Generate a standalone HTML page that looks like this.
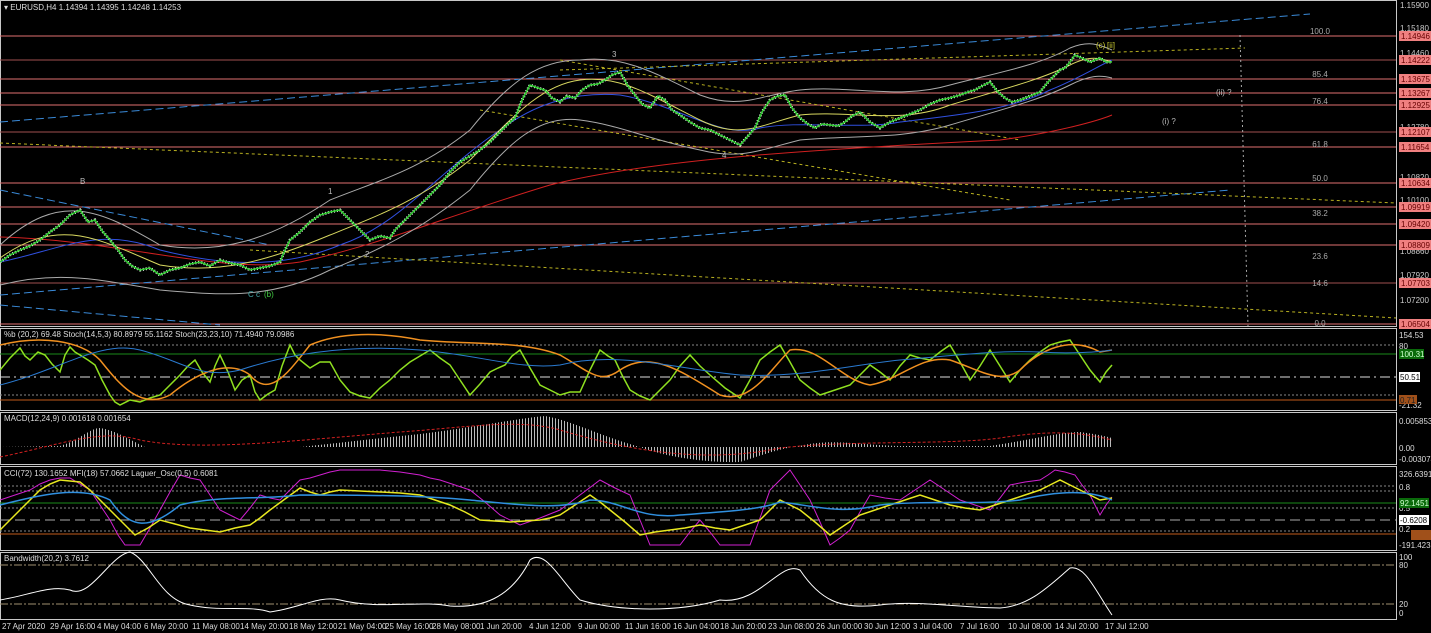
<!DOCTYPE html>
<html><head><meta charset="utf-8"><style>
html,body{margin:0;padding:0;background:#000;width:1431px;height:633px;overflow:hidden;font-family:"Liberation Sans",sans-serif}
svg text{font-family:"Liberation Sans",sans-serif;font-size:8px}
</style></head><body>
<svg width="1431" height="633" viewBox="0 0 1431 633" xmlns="http://www.w3.org/2000/svg">
<defs>
<pattern id="vb" width="3" height="4" patternUnits="userSpaceOnUse"><rect x="0" y="0" width="1" height="4" fill="#bbb"/></pattern>
</defs>
<rect width="1431" height="633" fill="#000"/>
<g stroke="#c8c8c8" stroke-width="1" fill="none">
<rect x="0.5" y="0.5" width="1396" height="326"/>
<rect x="0.5" y="328.5" width="1396" height="82"/>
<rect x="0.5" y="412.5" width="1396" height="52"/>
<rect x="0.5" y="466.5" width="1396" height="84"/>
<rect x="0.5" y="552.5" width="1396" height="67"/>
</g>
<g stroke="#e07070" stroke-width="1">
<line x1="0" y1="36" x2="1396" y2="36"/><line x1="0" y1="60" x2="1396" y2="60" stroke="#a05050"/>
<line x1="0" y1="79" x2="1396" y2="79"/><line x1="0" y1="93" x2="1396" y2="93"/>
<line x1="0" y1="105" x2="1396" y2="105"/><line x1="0" y1="132" x2="1396" y2="132" stroke="#a05050"/>
<line x1="0" y1="147" x2="1396" y2="147"/><line x1="0" y1="183" x2="1396" y2="183"/>
<line x1="0" y1="207" x2="1396" y2="207"/><line x1="0" y1="224" x2="1396" y2="224"/>
<line x1="0" y1="245" x2="1396" y2="245"/><line x1="0" y1="283" x2="1396" y2="283" stroke="#a05050"/>
<line x1="0" y1="324" x2="1396" y2="324"/>
</g>
<g fill="#aaa" text-anchor="middle"><text x="1320" y="34">100.0</text><text x="1320" y="77">85.4</text><text x="1320" y="104">76.4</text><text x="1320" y="147">61.8</text><text x="1320" y="181">50.0</text><text x="1320" y="216">38.2</text><text x="1320" y="259">23.6</text><text x="1320" y="286">14.6</text><text x="1320" y="326">0.0</text></g>
<g fill="none" stroke-width="1">
<line x1="0" y1="122" x2="1310" y2="14" stroke="#3a8ad8" stroke-dasharray="8,4"/>
<line x1="0" y1="295" x2="1230" y2="190" stroke="#3a8ad8" stroke-dasharray="8,4"/>
<line x1="0" y1="190" x2="270" y2="245" stroke="#3a8ad8" stroke-dasharray="8,4"/>
<line x1="0" y1="305" x2="220" y2="325" stroke="#3a8ad8" stroke-dasharray="8,4"/>
<line x1="0" y1="143" x2="1396" y2="203" stroke="#b8b020" stroke-dasharray="3,3"/>
<line x1="250" y1="250" x2="1396" y2="318" stroke="#b8b020" stroke-dasharray="3,3"/>
<line x1="480" y1="110" x2="1010" y2="200" stroke="#b8b020" stroke-dasharray="3,3"/>
<line x1="560" y1="60" x2="1020" y2="140" stroke="#b8b020" stroke-dasharray="3,3"/>
<line x1="560" y1="70" x2="1245" y2="48" stroke="#b8b020" stroke-dasharray="3,3"/>
<line x1="1240" y1="35" x2="1248" y2="326" stroke="#aaa" stroke-dasharray="2,3"/>
<path d="M0,237 C120,240 220,275 300,262 C380,245 450,215 550,185 C650,160 800,150 1000,140 C1060,132 1100,120 1112,115" stroke="#d02020"/>
<path d="M0,262 C60,250 100,225 160,250 C220,265 280,270 340,245 C400,225 440,170 500,130 C540,100 580,92 620,95 C680,105 720,140 760,128 C800,120 860,130 900,122 C960,115 1010,110 1050,90 C1080,78 1100,65 1112,60" stroke="#3050e0"/>
<path d="M0,258 C60,215 100,240 160,265 C220,275 270,260 330,235 C380,215 420,200 470,160 C510,120 540,85 580,80 C620,75 650,95 700,120 C740,140 760,125 800,115 C850,110 900,125 950,105 C1000,90 1040,80 1070,65 C1090,55 1100,58 1112,62" stroke="#d8d860"/>
<path d="M0,245 C60,190 100,210 160,245 C220,255 270,240 330,200 C380,180 420,170 470,130 C510,80 540,60 580,60 C620,55 650,70 700,95 C740,110 760,95 800,90 C850,85 900,100 950,85 C1000,72 1040,65 1070,48 C1090,40 1100,45 1112,50" stroke="#aaa"/>
<path d="M0,285 C60,270 100,280 160,290 C220,295 270,300 330,270 C380,250 420,230 470,190 C510,140 540,115 580,120 C620,125 650,140 700,150 C740,160 760,150 800,140 C850,135 900,140 950,125 C1000,110 1040,100 1070,85 C1090,75 1100,75 1112,78" stroke="#aaa"/>
<polyline stroke="#fff" stroke-width="3" stroke-dasharray="1,2" points="0,262 10,255 20,250 30,246 40,240 50,232 60,225 70,215 80,210 88,222 95,220 103,232 110,240 118,250 125,260 132,266 140,270 150,268 160,275 170,270 180,268 190,264 200,262 210,266 220,260 230,263 240,265 250,270 260,268 270,266 280,262 285,250 290,240 295,236 300,232 310,222 320,215 330,212 340,210 348,218 355,225 362,232 370,240 380,236 390,238 395,230 400,225 410,215 420,205 430,195 440,185 450,172 460,162 470,156 480,150 490,142 500,132 508,124 515,118 522,100 530,85 538,88 545,90 552,98 560,102 567,96 575,98 582,90 590,85 598,84 605,80 612,75 620,72 628,86 635,95 642,104 650,108 658,96 665,100 672,110 680,115 690,122 700,128 710,130 720,135 730,140 740,145 748,136 755,128 762,112 770,100 778,96 785,95 792,108 800,118 808,124 815,128 822,124 830,125 838,126 845,122 852,116 860,112 870,122 880,128 890,122 900,118 910,114 920,110 930,104 940,100 950,98 960,95 968,92 975,90 982,86 990,82 998,92 1005,98 1012,102 1020,100 1030,96 1040,92 1048,82 1055,75 1060,70 1065,68 1070,62 1075,55 1082,58 1090,62 1095,60 1100,58 1106,62 1112,62"/>
<polyline stroke="#30d030" stroke-width="1.5" points="0,262 10,255 20,250 30,246 40,240 50,232 60,225 70,215 80,210 88,222 95,220 103,232 110,240 118,250 125,260 132,266 140,270 150,268 160,275 170,270 180,268 190,264 200,262 210,266 220,260 230,263 240,265 250,270 260,268 270,266 280,262 285,250 290,240 295,236 300,232 310,222 320,215 330,212 340,210 348,218 355,225 362,232 370,240 380,236 390,238 395,230 400,225 410,215 420,205 430,195 440,185 450,172 460,162 470,156 480,150 490,142 500,132 508,124 515,118 522,100 530,85 538,88 545,90 552,98 560,102 567,96 575,98 582,90 590,85 598,84 605,80 612,75 620,72 628,86 635,95 642,104 650,108 658,96 665,100 672,110 680,115 690,122 700,128 710,130 720,135 730,140 740,145 748,136 755,128 762,112 770,100 778,96 785,95 792,108 800,118 808,124 815,128 822,124 830,125 838,126 845,122 852,116 860,112 870,122 880,128 890,122 900,118 910,114 920,110 930,104 940,100 950,98 960,95 968,92 975,90 982,86 990,82 998,92 1005,98 1012,102 1020,100 1030,96 1040,92 1048,82 1055,75 1060,70 1065,68 1070,62 1075,55 1082,58 1090,62 1095,60 1100,58 1106,62 1112,62"/>
</g>
<g fill="#cccc33"><text x="1096" y="48">(c)</text><text x="1107" y="48">[ii]</text></g>
<g fill="#bbb"><text x="1216" y="95">(ii) ?</text><text x="1162" y="124">(i) ?</text><text x="612" y="57">3</text><text x="80" y="184">B</text><text x="328" y="194">1</text><text x="365" y="257">2</text><text x="248" y="297" fill="#4aa">C</text><text x="256" y="297" fill="#4aa">c</text><text x="264" y="297" fill="#4c4">(b)</text><text x="722" y="158">4</text></g>
<g fill="#ccc"><text x="1400" y="8">1.15900</text><text x="1400" y="31">1.15180</text><text x="1400" y="56">1.14460</text><text x="1400" y="130">1.12780</text><text x="1400" y="180">1.10820</text><text x="1400" y="203">1.10100</text><text x="1400" y="254">1.08860</text><text x="1400" y="278">1.07920</text><text x="1400" y="303">1.07200</text></g>
<g>
<rect x="1399" y="31" width="32" height="10" fill="#f08080"/><text x="1401" y="39" fill="#600">1.14946</text>
<rect x="1399" y="55" width="32" height="10" fill="#f08080"/><text x="1401" y="63" fill="#600">1.14222</text>
<rect x="1399" y="74" width="32" height="10" fill="#f08080"/><text x="1401" y="82" fill="#600">1.13675</text>
<rect x="1399" y="88" width="32" height="10" fill="#f08080"/><text x="1401" y="96" fill="#600">1.13267</text>
<rect x="1399" y="100" width="32" height="10" fill="#f08080"/><text x="1401" y="108" fill="#600">1.12925</text>
<rect x="1399" y="127" width="32" height="10" fill="#f08080"/><text x="1401" y="135" fill="#600">1.12107</text>
<rect x="1399" y="142" width="32" height="10" fill="#f08080"/><text x="1401" y="150" fill="#600">1.11654</text>
<rect x="1399" y="178" width="32" height="10" fill="#f08080"/><text x="1401" y="186" fill="#600">1.10634</text>
<rect x="1399" y="202" width="32" height="10" fill="#f08080"/><text x="1401" y="210" fill="#600">1.09919</text>
<rect x="1399" y="219" width="32" height="10" fill="#f08080"/><text x="1401" y="227" fill="#600">1.09420</text>
<rect x="1399" y="240" width="32" height="10" fill="#f08080"/><text x="1401" y="248" fill="#600">1.08809</text>
<rect x="1399" y="278" width="32" height="10" fill="#f08080"/><text x="1401" y="286" fill="#600">1.07703</text>
<rect x="1399" y="319" width="32" height="10" fill="#f08080"/><text x="1401" y="327" fill="#600">1.06504</text>
</g>
<text x="4" y="10" fill="#ddd">▾ EURUSD,H4  1.14394 1.14395 1.14248 1.14253</text>
<g stroke-width="1" fill="none">
<line x1="0" y1="345" x2="1396" y2="345" stroke="#888" stroke-dasharray="2,2"/>
<line x1="0" y1="354" x2="1396" y2="354" stroke="#1a8a1a"/>
<line x1="0" y1="377" x2="1396" y2="377" stroke="#ddd" stroke-dasharray="10,4,2,4"/>
<line x1="0" y1="395" x2="1396" y2="395" stroke="#888" stroke-dasharray="2,2"/>
<line x1="0" y1="400" x2="1396" y2="400" stroke="#c05a1a"/>
<polyline stroke="#8fe020" stroke-width="1.5" points="0,370 10,358 20,348 25,356 30,360 38,352 45,355 52,364 60,372 65,355 70,347 75,352 80,355 88,360 95,365 102,380 110,395 115,402 120,405 130,400 140,402 150,398 160,395 170,385 180,375 188,366 195,360 202,372 210,382 215,366 220,355 228,372 235,390 242,380 250,375 255,392 260,400 268,394 275,390 282,366 290,345 295,355 300,360 305,364 310,368 320,362 330,362 340,380 350,392 360,396 370,398 380,388 390,380 400,370 410,362 420,356 430,350 440,358 450,365 460,380 470,395 480,384 490,372 498,368 505,365 512,356 520,350 530,368 540,385 550,390 560,395 570,392 580,392 590,370 600,350 608,356 615,360 622,375 630,390 640,396 650,400 660,390 670,380 680,366 690,355 700,366 710,375 725,388 740,398 750,380 760,360 770,352 780,345 790,362 800,380 810,388 820,395 835,390 850,385 860,375 870,365 880,372 890,380 900,366 910,355 920,358 930,360 940,352 950,345 960,362 970,380 980,366 990,350 1000,366 1010,382 1020,370 1030,360 1040,352 1050,345 1060,342 1070,340 1080,355 1090,370 1095,376 1100,382 1106,372 1112,365"/>
<path d="M0,345 C40,335 80,340 100,360 C120,385 140,410 170,395 C200,370 230,360 250,375 C270,400 290,370 310,345 C340,332 380,332 420,340 C470,345 520,340 560,355 C590,372 600,385 620,370 C650,350 680,370 720,395 C750,405 770,370 790,350 C820,345 840,380 870,385 C900,380 920,355 950,360 C980,370 1000,385 1020,370 C1040,350 1070,335 1100,352 L1112,350" stroke="#f09020" stroke-width="1.5"/>
<path d="M0,385 C60,370 100,340 140,350 C180,360 200,380 240,370 C300,350 360,345 420,350 C480,355 520,370 560,365 C620,350 680,370 740,375 C800,378 850,365 900,360 C960,355 1000,350 1040,352 C1070,354 1100,352 1112,350" stroke="#2a7ad0"/>
</g>
<g fill="#ddd"><text x="4" y="337">%b (20,2) 69.48  Stoch(14,5,3) 80.8979 55.1162  Stoch(23,23,10) 71.4940 79.0986</text>
<text x="1399" y="338">154.53</text><text x="1399" y="349">80</text><text x="1399" y="408">-21.32</text></g>
<rect x="1399" y="349" width="25" height="10" fill="#0a6a0a"/><text x="1400" y="357" fill="#cfc">100.31</text>
<rect x="1399" y="372" width="21" height="10" fill="#fff"/><text x="1400" y="380" fill="#000">50.51</text>
<rect x="1399" y="395" width="18" height="9" fill="#a0501a"/><text x="1400" y="403" fill="#222">0.71</text>
<text x="4" y="421" fill="#ddd">MACD(12,24,9) 0.001618 0.001654</text>
<path d="M0,447 L60,446 C80,440 90,428 100,428 C115,430 130,440 145,447 L300,447 C330,444 380,438 420,434 C470,428 520,418 545,416 C570,420 600,436 640,447 C660,455 700,463 740,462 C760,456 780,448 800,446 C830,438 860,445 900,446 L990,446 C1030,440 1060,432 1080,432 C1095,434 1105,436 1112,438 L1112,447 Z" fill="url(#vb)"/>
<path d="M0,457 C60,445 100,428 140,440 C200,452 300,440 400,432 C460,428 520,418 560,430 C620,448 700,465 780,448 C850,440 950,445 1000,438 C1050,430 1080,432 1112,440" stroke="#d02020" fill="none" stroke-dasharray="3,2"/>
<g fill="#ddd"><text x="1399" y="424">0.005853</text><text x="1399" y="451">0.00</text><text x="1399" y="462">-0.003074</text></g>
<g fill="none">
<line x1="0" y1="486" x2="1396" y2="486" stroke="#888" stroke-dasharray="2,2"/>
<line x1="0" y1="491" x2="1396" y2="491" stroke="#888" stroke-dasharray="2,2"/>
<line x1="0" y1="503" x2="1396" y2="503" stroke="#1a8a1a"/>
<line x1="0" y1="508" x2="1396" y2="508" stroke="#888" stroke-dasharray="2,2"/>
<line x1="0" y1="520" x2="1396" y2="520" stroke="#aaa" stroke-dasharray="10,5"/>
<line x1="0" y1="531" x2="1396" y2="531" stroke="#888" stroke-dasharray="2,2"/>
<line x1="0" y1="534" x2="1396" y2="534" stroke="#c05a1a"/>
<polyline stroke="#d020d0" points="0,500 15,495 30,490 40,484 50,480 60,478 70,478 80,484 90,490 100,505 110,520 118,535 125,545 140,545 150,528 160,510 170,492 180,475 190,478 200,480 210,495 220,510 230,515 240,520 250,508 260,495 270,498 280,500 290,490 300,480 310,478 320,475 330,472 340,470 360,470 380,470 400,472 420,475 430,478 440,480 455,485 470,490 485,502 500,515 510,520 520,525 540,518 560,510 580,495 600,480 615,488 630,495 640,520 650,545 665,545 680,545 690,532 700,520 710,532 720,545 735,545 750,545 760,518 770,490 780,480 790,470 800,485 810,500 820,522 830,545 840,538 850,530 860,512 870,495 885,498 900,500 915,490 930,480 945,490 960,500 975,505 990,510 1000,498 1010,485 1025,482 1040,480 1048,475 1055,470 1065,472 1075,475 1082,485 1090,495 1095,505 1100,515 1106,505 1112,497"/>
<polyline stroke="#e8e820" stroke-width="1.5" points="0,530 10,520 20,510 30,500 40,490 50,484 60,480 70,481 80,482 90,490 100,500 110,510 120,520 128,528 135,535 148,528 160,520 175,524 190,528 205,530 220,532 235,528 250,525 260,518 270,510 285,499 300,488 310,492 320,495 330,492 340,490 360,491 380,492 400,493 420,495 435,500 450,505 465,512 480,520 495,521 510,522 525,521 540,520 550,518 560,515 575,505 590,495 600,502 610,510 625,522 640,535 655,532 670,530 685,528 700,525 715,528 730,530 745,525 760,520 770,510 780,500 790,505 800,510 815,522 830,535 845,525 860,515 875,510 890,505 905,500 920,495 935,500 950,505 965,508 980,510 995,505 1010,500 1025,495 1040,490 1050,485 1060,480 1070,485 1080,490 1090,495 1100,500 1112,498"/>
<path d="M0,505 C40,495 80,485 110,500 C130,530 150,530 180,505 C220,495 260,500 300,495 C350,495 420,495 470,500 C520,505 560,510 590,500 C620,500 640,520 680,515 C720,512 760,510 780,502 C810,505 840,515 880,505 C930,500 980,505 1020,500 C1060,490 1090,490 1112,500" stroke="#3090e0" stroke-width="1.5"/>
</g>
<g fill="#ddd"><text x="4" y="476">CCI(72) 130.1652  MFI(18) 57.0662  Laguer_Osc(0.5) 0.6081</text><text x="1399" y="477">326.6391</text><text x="1399" y="490">0.8</text><text x="1399" y="511">0.5</text><text x="1399" y="532">0.2</text><text x="1399" y="548">-191.4231</text></g>
<rect x="1399" y="498" width="30" height="10" fill="#0a6a0a"/><text x="1400" y="506" fill="#cfc">92.1451</text>
<rect x="1399" y="515" width="30" height="10" fill="#fff"/><text x="1400" y="523" fill="#000">-0.6208</text>
<rect x="1411" y="530" width="20" height="10" fill="#a0501a"/>
<line x1="0" y1="565" x2="1396" y2="565" stroke="#a09070" stroke-dasharray="8,2,2,2"/>
<line x1="0" y1="604" x2="1396" y2="604" stroke="#a09070" stroke-dasharray="8,2,2,2"/>
<path d="M0,600 C30,595 50,585 70,590 C90,600 110,555 130,552 C150,560 160,600 190,605 C220,612 250,605 270,612 C300,608 320,595 340,600 C380,610 420,600 450,606 C480,608 510,600 530,560 C545,548 560,580 580,600 C620,612 680,612 720,600 C760,605 780,560 800,570 C820,600 840,610 880,605 C920,600 960,608 1000,608 C1030,606 1050,585 1070,568 C1085,565 1095,590 1112,615" stroke="#fff" fill="none"/>
<g fill="#ddd"><text x="4" y="561">Bandwidth(20,2) 3.7612</text><text x="1399" y="560">100</text><text x="1399" y="568">80</text><text x="1399" y="607">20</text><text x="1399" y="616">0</text></g>
<g fill="#ddd" font-size="7" style="font-size:7px">
<text x="2" y="629">27 Apr 2020</text><text x="50" y="629">29 Apr 16:00</text><text x="97" y="629">4 May 04:00</text><text x="144" y="629">6 May 20:00</text><text x="192" y="629">11 May 08:00</text><text x="240" y="629">14 May 20:00</text><text x="289" y="629">18 May 12:00</text><text x="338" y="629">21 May 04:00</text><text x="385" y="629">25 May 16:00</text><text x="432" y="629">28 May 08:00</text><text x="480" y="629">1 Jun 20:00</text><text x="529" y="629">4 Jun 12:00</text><text x="578" y="629">9 Jun 00:00</text><text x="625" y="629">11 Jun 16:00</text><text x="673" y="629">16 Jun 04:00</text><text x="720" y="629">18 Jun 20:00</text><text x="768" y="629">23 Jun 08:00</text><text x="816" y="629">26 Jun 00:00</text><text x="864" y="629">30 Jun 12:00</text><text x="913" y="629">3 Jul 04:00</text><text x="960" y="629">7 Jul 16:00</text><text x="1008" y="629">10 Jul 08:00</text><text x="1055" y="629">14 Jul 20:00</text><text x="1105" y="629">17 Jul 12:00</text>
</g>
</svg>
</body></html>
